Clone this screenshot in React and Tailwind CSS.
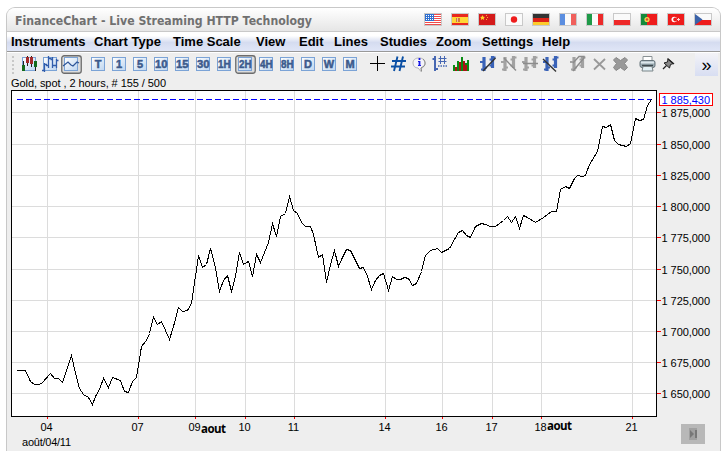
import { Fragment } from 'react';

const MENU = [
  ['Instruments', 'w-[83px]'],
  ['Chart Type', 'w-[79px]'],
  ['Time Scale', 'w-[83px]'],
  ['View', 'w-[43px]'],
  ['Edit', 'w-[35px]'],
  ['Lines', 'w-[46px]'],
  ['Studies', 'w-[56px]'],
  ['Zoom', 'w-[46px]'],
  ['Settings', 'w-[60px]'],
  ['Help', 'w-[40px]'],
];

const INTERVALS = ['T', '1', '5', '10', '15', '30', '1H', '2H', '4H', '8H', 'D', 'W', 'M'];

// flags are drawn on a 16x11 grid
const FLAGS = [
  <>
    <rect width="16" height="11" fill="#fff" />
    <path d="M0 .5h16M0 2.5h16M0 4.5h16M0 6.5h16M0 8.5h16M0 10.5h16" stroke="#f04a4a" />
    <rect width="9" height="7" fill="#2f6fd0" />
    <path d="M1 1.5h8M1 3.5h8M1 5.5h8" stroke="#fff" strokeDasharray="1 1" />
  </>,
  <>
    <rect width="16" height="11" fill="#e8281e" />
    <rect y="3" width="16" height="6" fill="#ffd736" />
    <rect x="4" y="4" width="4" height="4" fill="#d4793a" />
    <path d="M5.500 4v4" stroke="#e8c0a0" />
  </>,
  <>
    <rect width="16" height="11" fill="#d41a1a" />
    <path d="M3.500 1l.8 1.700 1.800.2-1.300 1.200.4 1.900-1.700-1-1.700 1 .4-1.900L1 2.900l1.700-.2z" fill="#ffd428" />
    <path d="M7 1.500h1M8 3.500h1M7 5.500h1" stroke="#ffb428" />
  </>,
  <>
    <rect width="16" height="11" fill="#fafafa" />
    <circle cx="8" cy="5.500" r="3.200" fill="#ee1c1c" />
  </>,
  <>
    <rect width="16" height="4" fill="#333" />
    <rect y="4" width="16" height="4" fill="#dc2318" />
    <rect y="8" width="16" height="3" fill="#fccb2c" />
  </>,
  <>
    <rect width="6" height="11" fill="#5b8ee0" />
    <rect x="5" width="6" height="11" fill="#fafafa" />
    <rect x="11" width="5" height="11" fill="#f0605c" />
  </>,
  <>
    <rect width="5" height="11" fill="#1e9a48" />
    <rect x="5" width="6" height="11" fill="#fafafa" />
    <rect x="11" width="5" height="11" fill="#ec2a2a" />
  </>,
  <>
    <rect width="16" height="6" fill="#fafafa" />
    <rect y="6" width="16" height="5" fill="#ee2929" />
  </>,
  <>
    <rect width="16" height="11" fill="#ee1c1c" />
    <rect width="6" height="11" fill="#148a3c" />
    <circle cx="6" cy="5.500" r="2.600" fill="#f0dc50" />
    <circle cx="6" cy="5.500" r="1.300" fill="#d84838" />
  </>,
  <>
    <rect width="16" height="11" fill="#ee1c1c" />
    <circle cx="6.300" cy="5.500" r="2.800" fill="#fff" />
    <circle cx="7.200" cy="5.500" r="2" fill="#ee1c1c" />
    <path d="M9 5.500h3M10.500 4v3" stroke="#ffd0d0" />
  </>,
  <>
    <rect width="16" height="6" fill="#fafafa" />
    <rect y="6" width="16" height="5" fill="#ee1c1c" />
    <path d="M0 0l7.500 5.500L0 11z" fill="#3a62a8" />
  </>,
];

const Tile = ({ children }) => (
  <>
    <rect x="3.500" y="2.500" width="13" height="13" fill="url(#tile)" stroke="#7ba3d6" />
    {children}
  </>
);

const BLUE = '#3a63b8';
const GRAY = '#999';

const TYPE_ICONS = [
  <Tile>
    <path d="M4.500 6v9M16.500 6v10M8.500 1v10M12.500 1v11" stroke="#222" />
    <path d="M3 10h3v6H3zM15 6h3v6h-3z" fill="#136b1b" />
    <path d="M7 2h3v6H7zM11 2h3v7h-3z" fill="#a32929" />
  </Tile>,
  <Tile>
    <path d="M4.500 8v9M2 15.500h2M4.500 9.500H7M8.500 1v12M6 10.500h2M8.500 3.500h3M12.500 2v11M12.500 4.500h-2M12.500 10.500h3M16.500 4v9M16.500 5.500h2M16.500 10.500H14" stroke="#315dac" strokeWidth="1.300" />
  </Tile>,
  <Tile>
    <path d="M2 11l5-4 3 3 2 1 4-4 2 1" fill="none" stroke="#2d5598" strokeWidth="1.200" />
  </Tile>,
];

const CURSOR_ICONS = [
  <path d="M3 8.500h15M10.500 1v15" stroke="#000" />,
  <path d="M9.500 1.500L6 16M15 1.500L11.500 16M4 6h14M3 11.500h14" stroke="#0c50a4" strokeWidth="1.900" />,
  <>
    <path d="M10 3c4 0 6 2 6 5s-2 5-4 5l.5 4L9 13c-3 0-5-2-5-5s2-5 6-5z" fill="#f4f4fa" stroke="#b5b5b5" />
    <path d="M14 4c2 2 3 5 1 7l-3 2 .5 3" fill="none" stroke="#888" />
    <path d="M9 6.500h2M9 10.500h3" stroke="#1717e6" />
    <path d="M10.500 3v2M10.500 6v5" stroke="#1717e6" strokeWidth="1.800" />
  </>,
  <>
    <path d="M5 1v15M2.500 4H5M5 14h3" stroke="#4767b2" strokeWidth="2" />
    <path d="M10.500 1v8M14.500 1v8M8.500 3.500h8M8.500 6.500h8" stroke="#4767b2" />
    <path d="M8 11h10" stroke="#4767b2" strokeWidth="1.500" strokeDasharray="1.500 1" />
  </>,
  <>
    <path d="M2 10h2v6H2zM6 6h2v10H6zM10 2h2v14h-2zM14 8h2v8h-2zM16 5h2v11h-2z" fill="#098d14" />
    <path d="M4 12h2v4H4zM8 7h2v9H8zM12 6h2v10h-2zM14 10h2v6h-2z" fill="#a91515" />
  </>,
];

function Bars({ color, line, slope }) {
  return (
    <>
      <path d="M6 2v14M14.500 1v12" stroke={color} strokeWidth="3.200" />
      <path d="M2 7h3M3 14.500h3M6 12.500h3M11.500 10.500h3M14.500 2.500h3M11.500 4.500h3" stroke={color} strokeWidth="2" />
      <path d={slope} stroke={line} strokeWidth="1.400" fill="none" />
    </>
  );
}

const LINE_ICONS = [
  <Bars color={BLUE} line="#333" slope="M5 16L17.500 3" />,
  <Bars color="#a2a2a2" line="#8c8c8c" slope="M5 3l12 12.500" />,
  <Bars color="#a2a2a2" line="#8c8c8c" slope="M3 8.500h15" />,
  <Bars color={BLUE} line="#333" slope="M2 4l13 12.500" />,
];

const DELETE_ICONS = [
  <Bars color="#a2a2a2" line="#8c8c8c" slope="M5 16L16 3V1.500h-5L5 8" />,
  <path d="M5 4l11 10.500M16 4L5 14.500" stroke={GRAY} strokeWidth="1.800" />,
  <path d="M6 2.500L10.500 5.500 15 2.500l2.500 2.500-3 3.500 3 4-3 3-4-3-4.500 3-2.500-3 3-4-3-3.500z" fill={GRAY} stroke="#888" strokeLinejoin="round" />,
];

const PRINT_ICONS = [
  <>
    <path d="M6 6V1.500h9V6" fill="#fff" stroke="#899194" />
    <rect x="3" y="5.500" width="15" height="7" rx="2" fill="#9babb3" stroke="#66747b" />
    <path d="M4 7.500h13" stroke="#dce7ec" strokeWidth="2" />
    <path d="M5 10.500h11" stroke="#3f4b50" strokeWidth="1.600" />
    <path d="M6 11.500h9l1 4.500H5z" fill="#e2f0f5" stroke="#7b8588" />
  </>,
  <>
    <path d="M10 4l5.500 4.500-3 1L11.500 13 6 8l3.500-1z" fill="#888" stroke="#222" />
    <path d="M8.500 10.500L5 14M9.500 3.500l6.500 5.500" stroke="#222" strokeWidth="1.300" />
  </>,
];

const X_TICKS = [[47, '04'], [138, '07'], [195, '09'], [245, '10'], [294, '11'], [385, '14'], [442, '16'], [492, '17'], [541, '18'], [632, '21']];

const Y_TICKS = [
  [112, '1 875,000'], [144, '1 850,000'], [175, '1 825,000'], [206, '1 800,000'], [237, '1 775,000'],
  [269, '1 750,000'], [300, '1 725,000'], [331, '1 700,000'], [362, '1 675,000'], [393, '1 650,000'],
];

const PRICES = `16,370 25,370 30,381 34,384 39,384 42,382 50,373 54,378 58,378 62,382 66,370 71,355 75,373 79,388 83,394
  88,397 92,404 95,396 99,389 103,378 108,387 112,377 120,380 124,391 128,392 132,381 136,377 141,346 146,340 149,333
  153,317 157,324 161,321 165,330 169,339 173,326 178,307 182,311 187,310 191,303 198,255 202,267 206,264 210,248
  215,267 219,291 223,280 227,275 231,291 235,276 239,252 243,264 248,261 252,276 256,254 260,262 264,252 268,242
  272,223 276,236 280,216 285,213 289,196 293,210 297,213 301,222 305,226 310,226 313,234 318,257 322,254 326,282
  330,264 334,250 338,266 342,257 346,249 350,250 359,268 363,267 367,276 371,289 375,280 379,275 383,273 388,290
  392,276 396,279 400,279 404,277 408,278 412,285 416,283 421,271 425,255 430,250 437,248 441,252 449,248 454,239
  458,232 462,230 466,235 470,237 475,226 481,223 485,224 490,226 495,226 503,220 507,216 511,222 515,216 519,228
  523,215 527,217 535,222 543,217 551,211 556,211 560,189 565,186 569,188 574,178 577,175 582,176 585,175 589,164
  597,151 602,126 606,127 610,124 614,140 618,144 622,145 626,146 630,143 635,118 639,120 643,119 647,105 651,99`;

function Group({ icons, active }) {
  return (
    <div className="flex">
      {icons.map((icon, i) => (
        <ToolButton key={i} active={i === active}>{icon}</ToolButton>
      ))}
    </div>
  );
}

function ToolButton({ active, children }) {
  return (
    <svg width="21" height="19" viewBox="0 0 21 19" className="shrink-0">
      {active && <rect x=".75" y=".75" width="19.500" height="17.500" rx="2.500" fill="#dcdcdc" stroke="#6c6c6c" strokeWidth="1.300" />}
      {children}
    </svg>
  );
}

function Chart() {
  return (
    <svg
      width="713"
      height="361"
      viewBox="7 90 713 361"
      className="block font-['Liberation_Sans',Arial,sans-serif] text-[11px]"
    >
      <g shapeRendering="crispEdges">
        <rect x="11" y="90" width="646" height="327" fill="#fff" />
        {X_TICKS.map(([x]) => (
          <Fragment key={x}>
            <rect x={x} y="91" width="1" height="325" fill="#dcdcdc" />
            <rect x={x} y="417" width="1" height="2" fill="#f00" />
          </Fragment>
        ))}
        {Y_TICKS.map(([y]) => (
          <Fragment key={y}>
            <rect x="12" y={y} width="644" height="1" fill="#dcdcdc" />
            <rect x="657" y={y} width="4" height="1" fill="#f00" />
          </Fragment>
        ))}
        <path d="M17 99.500h635" stroke="#00f" strokeDasharray="6 3" />
        <rect x="11.500" y="90.500" width="645" height="326" fill="none" stroke="#000" />
        <polyline points={PRICES} fill="none" stroke="#000" transform="translate(.5 .5)" />
      </g>
      {Y_TICKS.map(([y, label]) => (
        <text key={y} x="661.500" y={y + 5} textLength="48.500">{label}</text>
      ))}
      <rect x="659.500" y="93.500" width="53" height="12" fill="#fff" stroke="#f00" />
      <text x="661.500" y="104" textLength="48.500" fill="#00f">1 885,430</text>
      {X_TICKS.map(([x, label]) => (
        <text key={x} x={x - 0.5} y="431" textAnchor="middle">{label}</text>
      ))}
      <g className="font-['Open_Sans',sans-serif] text-[11.500px] font-bold">
        <text x="201" y="433" textLength="25">aout</text>
        <text x="547" y="430" textLength="25">aout</text>
      </g>
      <text x="22" y="446" textLength="49">août/04/11</text>
      <rect x="681" y="424" width="24" height="20" fill="#b8b8b8" />
      <rect x="689" y="428" width="8" height="12" fill="#a0a0a0" />
      <path d="M690 430l4 4-4 4zM695 430h2v8h-2z" fill="#777" />
    </svg>
  );
}

export default function App() {
  return (
    <div className="h-[451px] w-[724px] overflow-hidden bg-white pt-[7px] pl-[6px] font-['Liberation_Sans',Arial,sans-serif] text-black">
      <div className="h-[444px] w-[715px] overflow-hidden rounded-t-[9px] border border-b-0 border-[#c8c8c8] bg-[#eee]">
        <header className="flex h-6 items-center justify-between border-b border-[#c9c9c9] bg-linear-to-b from-white to-[#e6e6e6] pr-2 pl-2">
          <svg width="380" height="22" className="block overflow-visible">
            <text x="0" y="15.500" textLength="297" lengthAdjust="spacingAndGlyphs" fill="#707070" className="font-['DejaVu_Sans',Verdana,sans-serif] text-[11.500px] font-bold">
              FinanceChart - Live Streaming HTTP Technology
            </text>
          </svg>
          <div className="flex gap-[9px]">
            {FLAGS.map((flag, i) => (
              <svg key={i} width="18" height="13" viewBox="-1 -1 18 13">
                {flag}
                <rect x="-.5" y="-.5" width="17" height="12" fill="none" stroke="#c9c9c9" />
              </svg>
            ))}
          </div>
        </header>

        <nav className="flex h-5 items-center border-b border-[#999] bg-linear-to-b from-white from-20% via-[#d5dcf0] via-55% to-[#e0e6f7] pl-1 text-[13px] font-bold whitespace-nowrap">
          {MENU.map(([label, width]) => (
            <span key={label} className={width}>{label}</span>
          ))}
        </nav>

        <div className="flex h-6 items-start border-t border-white pl-[5px]">
          <svg width="7" height="20" className="mt-0.5 shrink-0">
            <path d="M1 1v20" stroke="#bbb" strokeWidth="1.500" strokeDasharray="2 2" />
          </svg>
          <svg width="0" height="0">
            <defs>
              <linearGradient id="tile" x2="1" y2="1">
                <stop stopColor="#fff" />
                <stop offset="1" stopColor="#bdd5f0" />
              </linearGradient>
            </defs>
          </svg>
          <div className="mt-0.5 flex gap-1.5">
            <Group icons={TYPE_ICONS} active={2} />
            <Group
              active={7}
              icons={INTERVALS.map((label) => (
                <Tile>
                  <text
                    x={label.length > 1 ? 4 : 10}
                    y="13"
                    textAnchor={label.length > 1 ? 'start' : 'middle'}
                    textLength={label.length > 1 ? 12.5 : undefined}
                    lengthAdjust="spacingAndGlyphs"
                    fill="#3c5a8c"
                    stroke="#3c5a8c"
                    strokeWidth=".5"
                    className="text-[11px] font-bold"
                  >
                    {label}
                  </text>
                </Tile>
              ))}
            />
            <Group icons={CURSOR_ICONS} />
            <Group icons={LINE_ICONS} />
            <Group icons={DELETE_ICONS} />
            <Group icons={PRINT_ICONS} />
          </div>
          <div className="mr-0.5 ml-auto flex h-[23px] w-[23px] shrink-0 justify-center bg-linear-to-b from-[#f3f3f7] to-[#d8def2] text-[18px] leading-[24px]">
            »
          </div>
        </div>

        <div className="h-[14px] pl-1 text-[11px] leading-[14px]">
          <svg width="160" height="14" className="block">
            <text x="0" y="11" textLength="155">Gold, spot , 2 hours, # 155 / 500</text>
          </svg>
        </div>
        <Chart />
      </div>
    </div>
  );
}
